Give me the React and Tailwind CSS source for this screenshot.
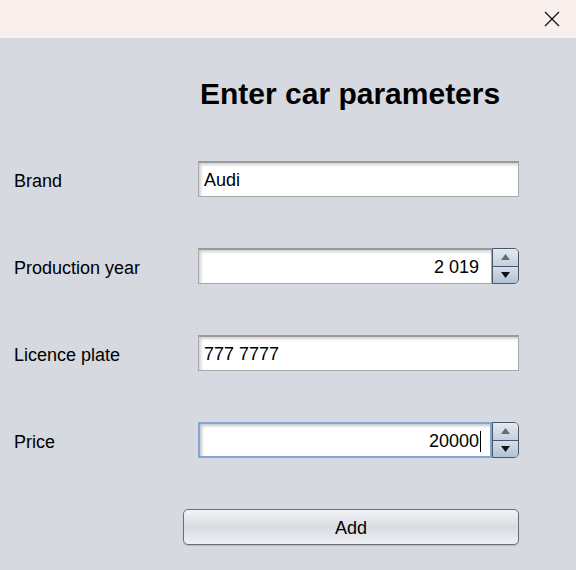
import React from "react";

const font = { fontFamily: '"Liberation Sans", Arial, sans-serif' };

function Spinner() {
  return (
    <div className="flex h-full w-[27px] flex-col overflow-hidden rounded-r-[5px] border border-[#4a5566]">
      <div className="flex flex-1 items-center justify-center border-b border-[#4a5566] bg-gradient-to-b from-[#e3e9f1] to-[#c4d0de]">
        <svg width="9" height="6" viewBox="0 0 9 6"><polygon points="4.5,0 9,6 0,6" fill="#6b6b6b" /></svg>
      </div>
      <div className="flex flex-1 items-center justify-center bg-gradient-to-b from-[#d6dfea] to-[#b3c2d4]">
        <svg width="9" height="6" viewBox="0 0 9 6"><polygon points="0,0 9,0 4.5,6" fill="#111" /></svg>
      </div>
    </div>
  );
}

function Field({ value, right, focused, spinner, caret }) {
  return (
    <div className="flex h-[36px] w-[321px]">
      <div
        className={
          "flex flex-1 items-center bg-white pt-[2px] text-[18px] text-black " +
          (focused
            ? "border-2 border-[#80a7d3] pr-[9px] shadow-[inset_2px_2px_3px_rgba(0,0,0,0.22)]"
            : "border border-[#a9a9a9] border-t-[#9a9a9a] border-t-2 shadow-[inset_2px_2px_3px_rgba(0,0,0,0.18)]") +
          (right ? (focused ? " justify-end" : " justify-end pr-[12px]") : " pl-[5px]")
        }
      >
        <span>{value}</span>
        {caret && <span className="ml-[1px] inline-block h-[21px] w-[1px] bg-black" />}
      </div>
      {spinner && <Spinner />}
    </div>
  );
}

function Row({ label, children }) {
  return (
    <div className="flex h-[36px] items-center">
      <div className="w-[198px] pl-[14px] pt-[4px] text-[18px] text-black">{label}</div>
      {children}
    </div>
  );
}

export default function App() {
  return (
    <div className="flex h-[570px] w-[576px] flex-col" style={font}>
      <div className="flex h-[38px] shrink-0 items-center justify-end bg-[#f9f0ed] pr-[16px]">
        <svg width="16" height="16" viewBox="0 0 16 16">
          <path d="M1 1 L15 15 M15 1 L1 15" stroke="#111" strokeWidth="1.3" fill="none" />
        </svg>
      </div>
      <div className="flex flex-1 flex-col bg-[#d6d9e0] pt-[38px]">
        <h1 className="pl-[200px] text-[30px] font-bold leading-[36px] text-black">Enter car parameters</h1>
        <div className="mt-[49px] flex flex-col gap-[51px]">
          <Row label="Brand">
            <Field value="Audi" />
          </Row>
          <Row label="Production year">
            <Field value="2 019" right spinner />
          </Row>
          <Row label="Licence plate">
            <Field value="777 7777" />
          </Row>
          <Row label="Price">
            <Field value="20000" right spinner focused caret />
          </Row>
        </div>
        <div className="mt-[51px] pl-[183px]">
          <button className="flex h-[36px] w-[336px] items-center justify-center rounded-[5px] border border-[#6e6e6e] bg-gradient-to-b from-[#f3f4f7] via-[#d9dbe2] to-[#eef0f6] pt-[3px] text-[18px] text-black shadow-[0_1px_1px_rgba(0,0,0,0.15)]">
            Add
          </button>
        </div>
      </div>
    </div>
  );
}
